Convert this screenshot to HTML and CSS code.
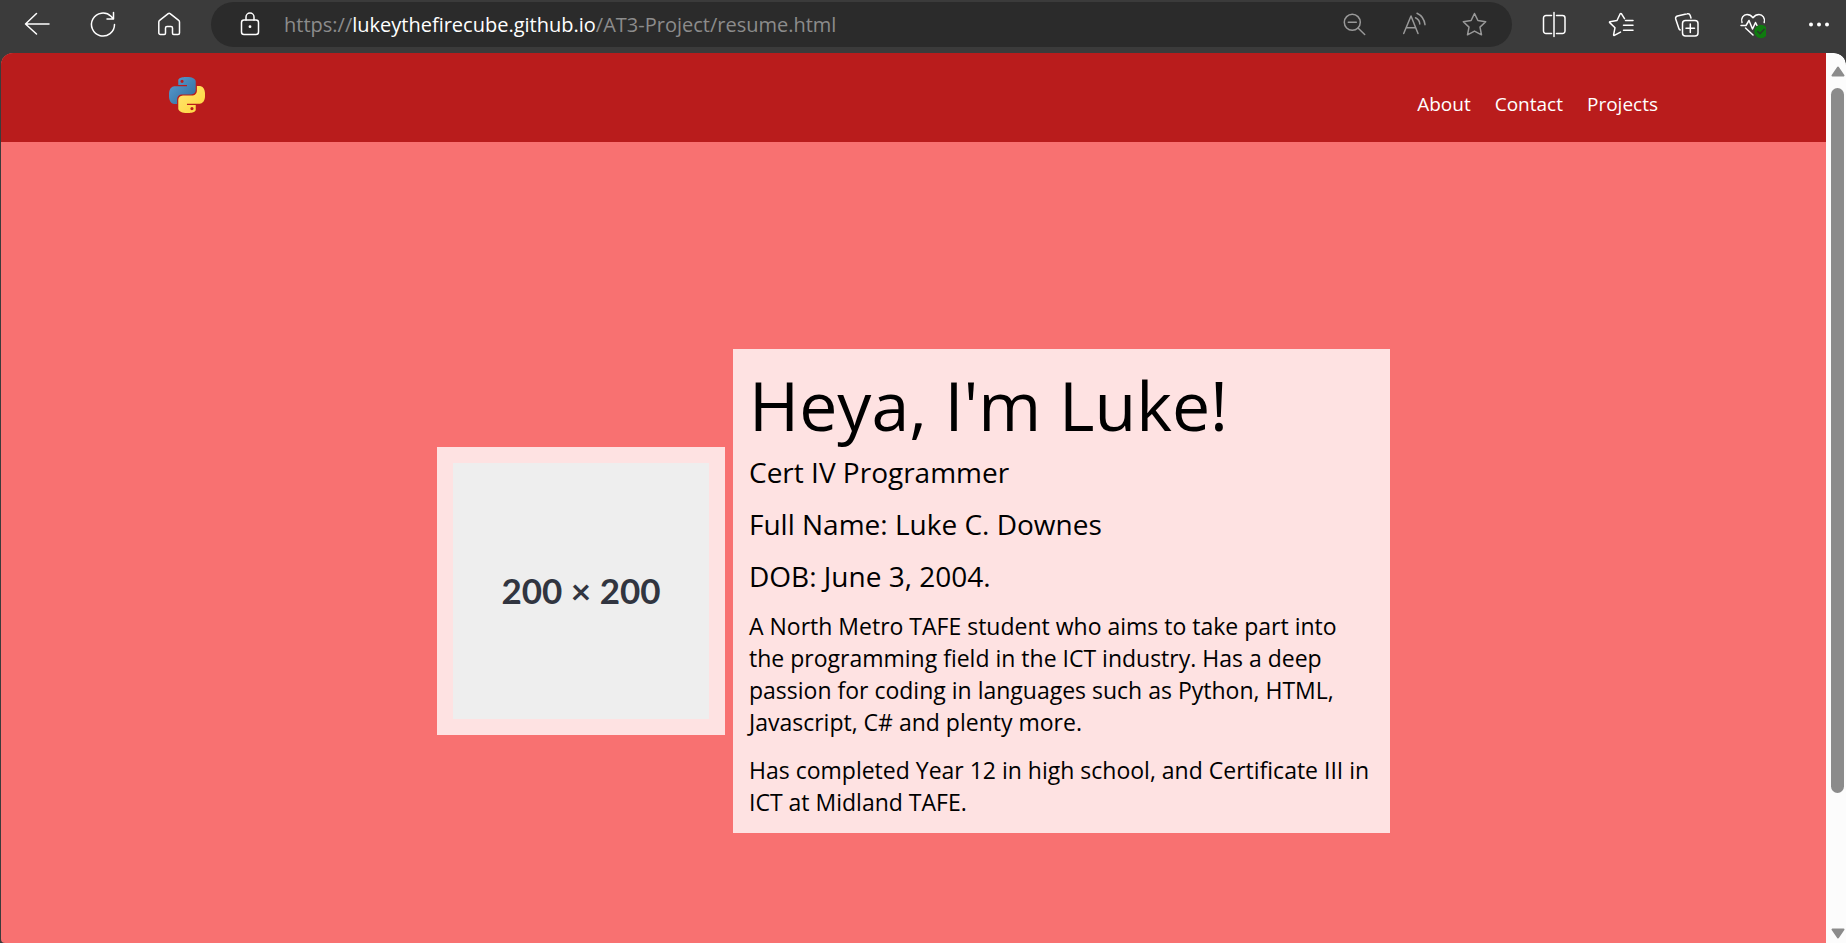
FILE: index.html
```html
<!DOCTYPE html>
<html lang="en">
<head>
<meta charset="utf-8">
<title>Resume</title>
<link rel="stylesheet" href="styles.css">
</head>
<body>
<div class="toolbar">
  <div class="tool-group">
    <button class="tool" type="button" aria-label="Back"><svg viewBox="0 0 28 29"><path d="M26 14H2.500M13.500 3.500 2.500 14l11 10"/></svg></button>
    <button class="tool" type="button" aria-label="Refresh"><svg viewBox="0 0 28 29"><path d="M25.5 14.5A11.5 11.5 0 1 1 22 6.3L24.5 9M24.5 2.5V9H18"/></svg></button>
    <button class="tool" type="button" aria-label="Home"><svg viewBox="0 0 28 29"><path d="M13.2 3.6 4.6 10.4a2 2 0 0 0-.8 1.6v11a1.5 1.5 0 0 0 1.5 1.5h4a1.2 1.2 0 0 0 1.2-1.2V18a1.5 1.5 0 0 1 1.5-1.5h4a1.5 1.5 0 0 1 1.5 1.5v5.3a1.2 1.2 0 0 0 1.2 1.2H23a1.5 1.5 0 0 0 1.5-1.5V12a2 2 0 0 0-.8-1.6l-8.6-6.8a1.5 1.5 0 0 0-1.9 0z"/></svg></button>
  </div>
  <div class="address">
    <button class="tool" type="button" aria-label="Site information"><svg viewBox="0 0 28 29"><rect x="5.5" y="10" width="17" height="14.5" rx="2.5"/><path d="M10 10V7a4 4 0 0 1 8 0v3"/><circle class="solid" cx="14" cy="16.7" r="1.4"/></svg></button>
    <div class="url" role="textbox" contenteditable="true" spellcheck="false" aria-label="Address">https://<span class="host">lukeythefirecube.github.io</span>/AT3-Project/resume.html</div>
    <div class="address-tools">
      <button class="tool tool-dim" type="button" aria-label="Zoom out"><svg viewBox="0 0 28 29"><circle cx="12.3" cy="12.3" r="8"/><path d="m18 18 6.7 6.5M8.3 12.3h8"/></svg></button>
      <button class="tool tool-dim" type="button" aria-label="Read aloud"><svg viewBox="0 0 28 29"><path d="M3.7 23.5 11 6l7 17.500M6.200 17.700h9.500M15.500 7.800q4 1.800 4.300 6.200M17 3.200q7 3.300 8 11.500"/></svg></button>
      <button class="tool tool-dim" type="button" aria-label="Add to favourites"><svg viewBox="0 0 28 29"><path d="m14.500 3.500 3.400 7 7.800 1.200-5.700 5.400 1.500 7.700-7-3.700-7 3.700L9 17.100l-5.700-5.400 7.800-1.200z"/></svg></button>
    </div>
  </div>
  <div class="tool-group">
    <button class="tool" type="button" aria-label="Split screen"><svg viewBox="0 0 28 29"><path d="M11.500 5.500H6A2.500 2.500 0 0 0 3.500 8v13A2.500 2.500 0 0 0 6 23.500h5.500M16.500 5.500H22.500A2.500 2.500 0 0 1 25 8v13a2.500 2.500 0 0 1-2.500 2.500h-6M14 2.500v24"/></svg></button>
    <button class="tool" type="button" aria-label="Favourites"><svg viewBox="0 0 28 29"><path d="M18.500 8.700 15.500 3.800a.8.8 0 0 0-1.300 0L11 10.500l-7.100 1.200a.5.5 0 0 0-.2.900L9 17.700l-1.400 7.100a.6.6 0 0 0 .8.600l6.100-3.300M19.500 10.500H27M17.500 15.300H27M17.500 20.300H27"/></svg></button>
    <button class="tool" type="button" aria-label="Collections"><svg viewBox="0 0 28 29"><rect x="10.500" y="10.500" width="15.500" height="15.500" rx="3"/><path d="M18.300 14v8.500M14 18.300h8.500M19 8l-.8-2.500a2.500 2.500 0 0 0-3-1.700L5.500 6a2.500 2.500 0 0 0-1.800 3l3 9a3 3 0 0 0 1.500 2"/></svg></button>
    <button class="tool" type="button" aria-label="Browser essentials"><svg viewBox="0 0 28 29"><path d="M4 12.500C2.500 8 5.500 4.500 9 4.500c2.500 0 4.500 1.300 6 3.200 1.500-1.900 3.500-3.200 6-3.200 3.500 0 6.500 3.500 5.200 8M7.500 18l7.500 7M3 15.500h5l3-5 3.500 8.500 3-6.500 1.500 3"/><circle class="badge" cx="23" cy="21.500" r="6.700"/><path class="badge-tick" d="m19.700 21.500 2.300 2.300 4.200-4.500"/></svg></button>
    <button class="tool" type="button" aria-label="Settings and more"><svg viewBox="0 0 28 29"><g class="solid"><circle cx="7" cy="14.500" r="2"/><circle cx="15" cy="14.500" r="2"/><circle cx="23" cy="14.500" r="2"/></g></svg></button>
  </div>
</div>

<div class="viewport">
  <div class="page">
    <header class="site-header">
      <a class="logo" href="#" aria-label="Home">
        <svg viewBox="0 0 24 24">
          <defs>
            <linearGradient id="blue" x1="0" y1="0" x2="1" y2="1"><stop offset="0" stop-color="#5a9fd4"/><stop offset="1" stop-color="#306998"/></linearGradient>
            <linearGradient id="yellow" x1="0" y1="0" x2="1" y2="1"><stop offset="0" stop-color="#ffe873"/><stop offset="1" stop-color="#ffd43b"/></linearGradient>
          </defs>
          <path fill="url(#blue)" d="M14.25.18l.9.2.73.26.59.3.45.32.34.34.25.34.16.33.1.3.04.26.02.2-.01.13V8.5l-.05.63-.13.55-.21.46-.26.38-.3.31-.33.25-.35.19-.35.14-.33.1-.3.07-.26.04-.21.02H8.77l-.69.05-.59.14-.5.22-.41.27-.33.32-.27.35-.2.36-.15.37-.1.35-.07.32-.04.27-.02.21v3.06H3.17l-.21-.03-.28-.07-.32-.12-.35-.18-.36-.26-.36-.36-.35-.46-.32-.59-.28-.73-.21-.88-.14-1.05-.05-1.23.06-1.22.16-1.04.24-.87.32-.71.36-.57.4-.44.42-.33.42-.24.4-.16.36-.1.32-.05.24-.01h.16l.06.01h8.160v-.83H6.180l-.01-2.75-.02-.37.05-.34.11-.31.17-.28.25-.26.31-.23.38-.2.44-.18.51-.15.58-.12.64-.1.71-.06.77-.04.84-.02 1.27.05zm-6.300 1.980l-.23.33-.08.41.08.41.23.34.33.22.41.09.41-.09.33-.22.23-.34.08-.41-.08-.41-.23-.33-.33-.22-.41-.09-.41.09z"/>
          <path fill="url(#yellow)" d="M21.040 6.110l.28.06.32.12.35.18.36.27.36.35.35.47.32.59.28.73.21.88.14 1.04.05 1.23-.06 1.23-.16 1.04-.24.86-.32.71-.36.57-.4.45-.42.33-.42.24-.4.16-.36.09-.32.05-.24.02-.16-.01h-8.220v.82h5.840l.01 2.76.02.36-.05.34-.11.31-.17.29-.25.25-.31.24-.38.2-.44.17-.51.15-.58.13-.64.09-.71.07-.77.04-.84.01-1.27-.04-1.07-.14-.9-.2-.73-.25-.59-.3-.45-.33-.34-.34-.25-.34-.16-.33-.1-.3-.04-.25-.02-.2.01-.13v-5.340l.05-.64.13-.54.21-.46.26-.38.3-.32.33-.24.35-.2.35-.14.33-.1.3-.06.26-.04.21-.02.13-.01h5.840l.69-.05.59-.14.5-.21.41-.28.33-.32.27-.35.2-.36.15-.36.1-.35.07-.32.04-.28.02-.21V6.070h2.090l.14.01zm-6.470 14.250l-.23.33-.08.41.08.41.23.33.33.23.41.08.41-.08.33-.23.23-.33.08-.41-.08-.41-.23-.33-.33-.23-.41-.08-.41.08z"/>
        </svg>
      </a>
      <nav class="nav">
        <a href="#about">About</a>
        <a href="#contact">Contact</a>
        <a href="#projects">Projects</a>
      </nav>
    </header>
    <main class="hero">
      <div class="photo"><div class="placeholder">200 × 200</div></div>
      <section class="card">
        <h1>Heya, I'm Luke!</h1>
        <h2>Cert IV Programmer</h2>
        <h2>Full Name: Luke C. Downes</h2>
        <h2>DOB: June 3, 2004.</h2>
        <p>A North Metro TAFE student who aims to take part into the programming field in the ICT industry. Has a deep passion for coding in languages such as Python, HTML, Javascript, C# and plenty more.</p>
        <p>Has completed Year 12 in high school, and Certificate III in ICT at Midland TAFE.</p>
      </section>
    </main>
  </div>
  <div class="scrollbar" aria-hidden="true">
    <svg class="arrow" viewBox="0 0 14 11"><path d="M7 1.500 12.500 9.500h-11z"/></svg>
    <div class="track"><div class="thumb"></div></div>
    <svg class="arrow" viewBox="0 0 14 11"><path d="M7 9.500 1.500 1.500h11z"/></svg>
  </div>
</div>
</body>
</html>
```
FILE: styles.css
```css
* {
  box-sizing: border-box;
}

body {
  margin: 0;
  height: 100vh;
  display: flex;
  flex-direction: column;
  overflow: hidden;
  background: #3b3b3b;
  font-family: "Open Sans", "Noto Sans", sans-serif;
}

/* Browser toolbar */
.toolbar {
  flex: none;
  display: flex;
  gap: 20px;
  padding: 2px 6px 6px 15px;
}

.tool-group {
  display: flex;
  gap: 22px;
}

.tool {
  flex: none;
  display: flex;
  align-items: center;
  justify-content: center;
  width: 44px;
  height: 45px;
  padding: 0;
  border: 0;
  background: none;
  color: #fff;
}

.tool-dim {
  color: #999;
}

.tool svg {
  width: 28px;
  height: 29px;
  fill: none;
  stroke: currentColor;
  stroke-width: 1.5;
  stroke-linecap: round;
  stroke-linejoin: round;
}

.tool .solid {
  fill: currentColor;
  stroke: none;
}

.tool .badge {
  fill: #0f7b0f;
  stroke: none;
}

.tool .badge-tick {
  stroke: #2b3b2b;
}

.address {
  flex: 1;
  min-width: 0;
  display: flex;
  align-items: center;
  padding: 0 16px 0 17px;
  border-radius: 23px;
  background: #2b2b2b;
}

.url {
  flex: 1;
  min-width: 0;
  padding-left: 12px;
  overflow: hidden;
  white-space: nowrap;
  font-size: 20px;
  line-height: 28px;
  color: #8c8c8c;
}

.host {
  color: #fff;
}

.address-tools {
  display: flex;
  gap: 16px;
}

/* Page area */
.viewport {
  flex: 1;
  min-height: 0;
  display: flex;
  margin-left: 1px;
  border-radius: 12px 12px 0 4px;
  overflow: hidden;
}

.page {
  flex: 1;
  min-width: 0;
  overflow: hidden;
  background: #f87171;
}

.site-header {
  display: flex;
  align-items: flex-end;
  justify-content: space-between;
  padding: 24px 168px;
  background: #b91c1c;
}

.logo {
  display: block;
  padding-bottom: 5px;
}

.logo svg {
  display: block;
  width: 36px;
  height: 36px;
}

.nav {
  display: flex;
  gap: 24px;
  font-size: 19px;
  line-height: 28px;
}

.nav a {
  color: #fff;
  text-decoration: none;
}

.hero {
  min-height: calc(100% + 8px);
  display: flex;
  align-items: center;
  justify-content: center;
  gap: 8px;
}

.photo {
  padding: 16px;
  background: #fee2e2;
}

.placeholder {
  display: flex;
  align-items: center;
  justify-content: center;
  width: 256px;
  height: 256px;
  padding-bottom: 2px;
  background: #eee;
  color: #313540;
  font-family: Lato, sans-serif;
  font-size: 35px;
  font-weight: 700;
}

.card {
  display: flex;
  flex-direction: column;
  gap: 16px;
  max-width: 657px;
  padding: 17px 16px 15px;
  background: #fee2e2;
  color: #000;
}

.card h1,
.card h2,
.card p {
  margin: 0;
  font-weight: 400;
}

.card h1 {
  margin-bottom: -6px;
  font-size: 68px;
  line-height: 78px;
}

.card h2 {
  font-size: 28px;
  line-height: 36px;
}

.card p {
  font-size: 23px;
  line-height: 32px;
}

/* Scrollbar */
.scrollbar {
  flex: none;
  display: flex;
  flex-direction: column;
  align-items: center;
  gap: 11px;
  width: 20px;
  padding: 13px 0 4px 3px;
  border-top-right-radius: 12px;
  background: #fcfcfc;
}

.arrow {
  flex: none;
  width: 14px;
  height: 11px;
  fill: #8b8b8b;
  stroke: #8b8b8b;
  stroke-width: 2;
  stroke-linejoin: round;
}

.track {
  flex: 1;
}

.thumb {
  width: 13px;
  height: 85%;
  border-radius: 7px;
  background: #8b8b8b;
}
```
